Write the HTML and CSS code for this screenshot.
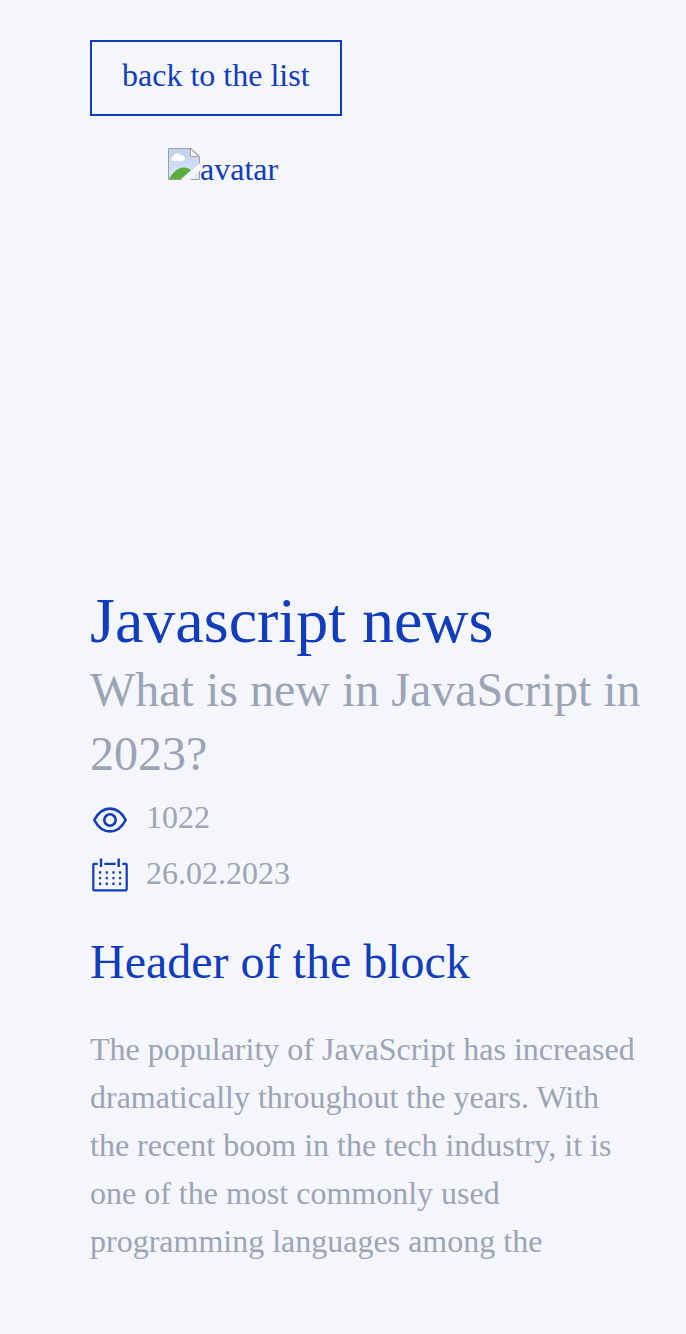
FILE: index.html
```html
<!DOCTYPE html>
<html lang="en">
<head>
<meta charset="utf-8">
<title>Javascript news</title>
<link rel="stylesheet" href="styles.css">
</head>
<body>
<main class="article">
  <a class="back">back to the list</a>
  <div class="avatar">
    <svg class="avatar-icon" viewBox="0 0 32 32">
      <defs><linearGradient id="sky" x1="0" y1="0" x2="0" y2="1"><stop offset="0" stop-color="#bfd1f2"/><stop offset="1" stop-color="#dce7fa"/></linearGradient></defs>
      <path d="M1 1H22.500V8.500H31V31H1Z" fill="url(#sky)"/>
      <path d="M1 31C5 24 10 19.500 16 19.500C19 19.500 21 20.500 23 22L13 31Z" fill="#5aac3b"/>
      <path d="M4.500 13a2.500 2.500 0 0 1 .5-4.500a4 4 0 0 1 7.500-1a3 3 0 0 1 2.500 5.500Z" fill="#fff"/>
      <path d="M31.500 31.500V8.500L23 .5H.5V31.500Z" fill="none" stroke="#a0a0a0"/>
      <path d="M22.500 1V8.500H31Z" fill="#fff" stroke="#a0a0a0"/>
      <path d="M13 32L32 15V22.500L22 32Z" fill="#f5f6fc"/>
    </svg><span>avatar</span>
  </div>
  <h1 class="title">Javascript news</h1>
  <p class="subtitle">What is new in JavaScript in 2023?</p>
  <div class="meta">
    <div class="meta-row">
      <svg class="icon" viewBox="0 0 40 40" fill="none" stroke="#113cbc" stroke-width="2.600">
        <path d="M4.300 20C8 12.800 13.300 8.600 20 8.600S32 12.800 35.700 20C32 27.200 26.700 31.400 20 31.400S8 27.200 4.300 20Z" stroke-linejoin="round"/>
        <circle cx="20" cy="20" r="5.700"/>
      </svg>
      <span>1022</span>
    </div>
    <div class="meta-row">
      <svg class="icon" viewBox="0 0 40 40" fill="none" stroke="#113cbc" stroke-width="2.200">
        <path d="M7.700 9.900H4.300Q3.300 9.900 3.300 10.900V35.200Q3.300 36.300 4.300 36.300H35.700Q36.700 36.300 36.700 35.200V10.900Q36.700 9.900 35.700 9.900H32.300M14.300 9.900H25.700"/>
        <path d="M11 4.400V13M28.700 4.400V13" stroke-width="2.400"/>
        <path d="M9 18.500H31.300M9 24.100H31.300M9 29.800H31.300" stroke-width="2.400" stroke-dasharray="2.200 4.470"/>
      </svg>
      <span>26.02.2023</span>
    </div>
  </div>
  <h2 class="block-title">Header of the block</h2>
  <p class="text">The popularity of JavaScript has increased dramatically throughout the years. With the recent boom in the tech industry, it is one of the most commonly used programming languages among the</p>
</main>
</body>
</html>
```
FILE: styles.css
```css
* { box-sizing: border-box; margin: 0; padding: 0; }
body {
  background: #f5f6fc;
  color: #113cbc;
  font: 32px/48px "Liberation Serif", "Times New Roman", serif;
}
.article {
  display: flex;
  flex-direction: column;
  align-items: flex-start;
  padding: 40px 40px 0 90px;
}
.back {
  height: 76px;
  padding: 9px 30px 15px;
  border: 2px solid #113cbc;
}
.avatar {
  display: flex;
  align-items: flex-start;
  height: 438px;
  margin: 29px 0 0 78px;
}
.avatar-icon { width: 32px; height: 32px; margin-top: 3px; }
.title { font-size: 64px; font-weight: 400; line-height: 76px; }
.subtitle { margin-top: -1px; color: #9ba4b4; font-size: 48px; line-height: 64px; }
.meta {
  display: flex;
  flex-direction: column;
  gap: 8px;
  margin-top: 7px;
  color: #9ba4b4;
}
.meta-row { display: flex; gap: 16px; height: 48px; }
.icon { width: 40px; height: 40px; margin-top: 7px; }
.meta-row + .meta-row .icon { margin-top: 5px; }
.block-title { margin-top: 33px; font-size: 48px; font-weight: 400; line-height: 64px; }
.text { margin-top: 31px; color: #9ba4b4; }
```
